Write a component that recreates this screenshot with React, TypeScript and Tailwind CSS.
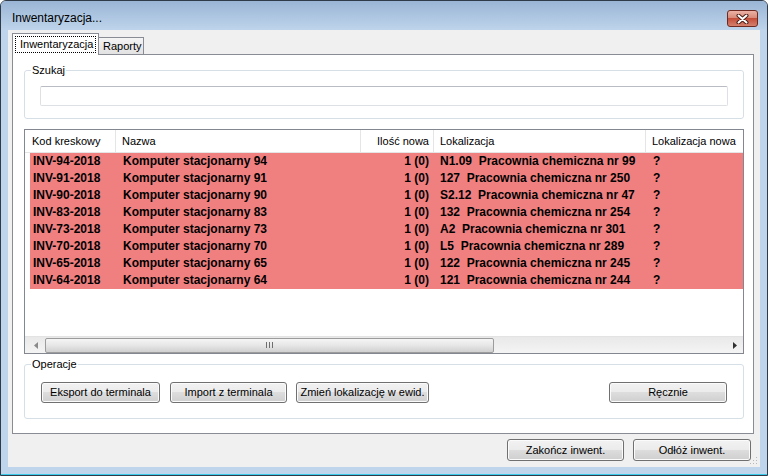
import { useState } from 'react';

const rows = [
    ['INV-94-2018', 'Komputer stacjonarny 94', '1 (0)', 'N1.09  Pracownia chemiczna nr 99', '?'],
    ['INV-91-2018', 'Komputer stacjonarny 91', '1 (0)', '127  Pracownia chemiczna nr 250', '?'],
    ['INV-90-2018', 'Komputer stacjonarny 90', '1 (0)', 'S2.12  Pracownia chemiczna nr 47', '?'],
    ['INV-83-2018', 'Komputer stacjonarny 83', '1 (0)', '132  Pracownia chemiczna nr 254', '?'],
    ['INV-73-2018', 'Komputer stacjonarny 73', '1 (0)', 'A2  Pracownia chemiczna nr 301', '?'],
    ['INV-70-2018', 'Komputer stacjonarny 70', '1 (0)', 'L5  Pracownia chemiczna nr 289', '?'],
    ['INV-65-2018', 'Komputer stacjonarny 65', '1 (0)', '122  Pracownia chemiczna nr 245', '?'],
    ['INV-64-2018', 'Komputer stacjonarny 64', '1 (0)', '121  Pracownia chemiczna nr 244', '?'],
];

function WinButton({ label, w, h }: { label: string; w: string; h: string }) {
    return (
        <button
            className={`${w} ${h} shrink-0 rounded-[3px] border border-[#707070] bg-[linear-gradient(to_bottom,#f2f2f2_0%,#ebebeb_50%,#dddddd_50%,#cfcfcf_100%)] shadow-[inset_0_0_0_1px_#fbfbfb] text-[11px] leading-none text-black`}
        >
            {label}
        </button>
    );
}

function App() {
    const [search, setSearch] = useState('');

    return (
        <div className="w-[768px] h-[476px] bg-white font-['Liberation_Sans',Arial,sans-serif] text-[11px] text-black">
            <div className="flex flex-col w-full h-full rounded-t-[6px] border border-[#2f3b48] bg-[#bfd5eb] overflow-hidden">

                {/* pasek tytułu */}
                <div className="flex items-start h-[29px] shrink-0 bg-gradient-to-b from-[#9ab5d5] to-[#bed4eb]">
                    <div className="pl-[11px] pt-[9px] text-[12px] leading-[16px]">Inwentaryzacja...</div>
                    <div className="ml-auto mt-[9px] mr-[9px] w-[31px] h-[17px] rounded-[3px] border border-[#6e2a20] bg-[linear-gradient(to_bottom,#ebb2a5_0%,#d98b7a_45%,#c34e3a_50%,#d5806e_100%)] flex items-center justify-center">
                        <svg width="13" height="10" viewBox="0 0 13 10">
                            <path d="M2.5 1.5 L10.5 8.5 M10.5 1.5 L2.5 8.5" stroke="#4b1c15" strokeWidth="4" strokeLinecap="round" />
                            <path d="M2.5 1.5 L10.5 8.5 M10.5 1.5 L2.5 8.5" stroke="#ffffff" strokeWidth="2" strokeLinecap="round" />
                        </svg>
                    </div>
                </div>

                {/* ramka + obszar klienta */}
                <div className="flex h-[437px] shrink-0">
                    <div className="w-[7px]" />
                    <div className="relative w-[752px] h-[437px] bg-[#f0f0f0] flex flex-col">

                        {/* zakładki */}
                        <div className="flex items-end h-[24px] pl-[4px]">
                            <div className="relative z-10 w-[87px] h-[22px] -mb-px bg-white border border-b-0 border-[#898c95] px-[2px] pt-[2px]">
                                <div className="h-[17px] border border-dotted border-black pl-[4px] leading-[15px] whitespace-nowrap">Inwentaryzacja</div>
                            </div>
                            <div className="w-[45px] h-[17px] border-t border-r border-[#898c95] bg-gradient-to-b from-[#f4f4f4] to-[#e2e2e2] pl-[4px] leading-[16px]">Raporty</div>
                        </div>

                        {/* panel zakładki */}
                        <div className="ml-[4px] w-[742px] h-[380px] border border-[#898c95] bg-white pl-[11px] pt-[8px]">

                            {/* Szukaj */}
                            <fieldset className="w-[720px] h-[56px] border border-[#d5dfe5] rounded-[3px]">
                                <legend className="ml-[6px] px-[1px] leading-[14px]">Szukaj</legend>
                                <input
                                    value={search}
                                    onChange={(e) => setSearch(e.target.value)}
                                    className="block mt-[9px] ml-[15px] w-[688px] h-[20px] border border-[#dde1e6] border-t-[#b9bdc3] rounded-[2px] bg-white outline-none px-[3px] text-[11px]"
                                />
                            </fieldset>

                            {/* lista */}
                            <div className="mt-[10px] w-[720px] h-[225px] border border-[#828790] bg-white flex flex-col">
                                <div className="flex h-[23px] shrink-0 border-b border-[#e5e5e5] leading-[22px] whitespace-nowrap">
                                    <div className="w-[91px] pl-[7px] border-r border-[#e5e5e5]">Kod kreskowy</div>
                                    <div className="w-[245px] pl-[6px] border-r border-[#e5e5e5]">Nazwa</div>
                                    <div className="w-[73px] pr-[4px] text-right border-r border-[#e5e5e5]">Ilość nowa</div>
                                    <div className="w-[212px] pl-[6px] border-r border-[#e5e5e5]">Lokalizacja</div>
                                    <div className="flex-1 pl-[6px] overflow-hidden">Lokalizacja nowa</div>
                                </div>

                                <div className="flex-1">
                                    {rows.map((r) => (
                                        <div key={r[0]} className="ml-[5px] flex h-[17px] bg-[#f08080] font-bold text-[12px] leading-[17px] whitespace-pre">
                                            <div className="w-[86px] pl-[3px] overflow-hidden">{r[0]}</div>
                                            <div className="w-[245px] pl-[7px] overflow-hidden">{r[1]}</div>
                                            <div className="w-[73px] pr-[5px] text-right overflow-hidden">{r[2]}</div>
                                            <div className="w-[212px] pl-[6px] overflow-hidden">{r[3]}</div>
                                            <div className="flex-1 pl-[7px] overflow-hidden">{r[4]}</div>
                                        </div>
                                    ))}
                                </div>

                                {/* pasek przewijania */}
                                <div className="flex items-center h-[17px] shrink-0 border-t border-[#e3e3e3] bg-gradient-to-b from-[#e9e9e9] to-[#f4f4f4]">
                                    <div className="w-[20px] flex justify-center pl-[2px]">
                                        <svg width="4" height="7" viewBox="0 0 4 7"><path d="M4 0 L0 3.5 L4 7 Z" fill="#8a8a8a" /></svg>
                                    </div>
                                    <div className="w-[449px] h-[15px] rounded-[2px] border border-[#9c9c9c] bg-gradient-to-b from-[#f5f5f5] via-[#e6e6e6] to-[#d0d0d0] flex items-center justify-center gap-[2px]">
                                        <div className="w-px h-[6px] bg-[#6e6e6e]" />
                                        <div className="w-px h-[6px] bg-[#6e6e6e]" />
                                        <div className="w-px h-[6px] bg-[#6e6e6e]" />
                                    </div>
                                    <div className="flex-1" />
                                    <div className="w-[17px] flex justify-center">
                                        <svg width="4" height="7" viewBox="0 0 4 7"><path d="M0 0 L4 3.5 L0 7 Z" fill="#303030" /></svg>
                                    </div>
                                </div>
                            </div>

                            {/* Operacje */}
                            <fieldset className="mt-[3px] w-[720px] h-[62px] border border-[#d5dfe5] rounded-[3px]">
                                <legend className="ml-[6px] px-[1px] leading-[14px]">Operacje</legend>
                                <div className="flex mt-[11px] px-[16px]">
                                    <WinButton label="Eksport do terminala" w="w-[119px]" h="h-[21px]" />
                                    <div className="ml-[10px]"><WinButton label="Import z terminala" w="w-[117px]" h="h-[21px]" /></div>
                                    <div className="ml-[9px]"><WinButton label="Zmień lokalizację w ewid." w="w-[133px]" h="h-[21px]" /></div>
                                    <div className="ml-auto"><WinButton label="Ręcznie" w="w-[118px]" h="h-[21px]" /></div>
                                </div>
                            </fieldset>
                        </div>

                        {/* przyciski na dole */}
                        <div className="flex justify-end gap-[9px] pr-[9px] mt-[5px]">
                            <WinButton label="Zakończ inwent." w="w-[117px]" h="h-[22px]" />
                            <WinButton label="Odłóż inwent." w="w-[118px]" h="h-[22px]" />
                        </div>

                        {/* uchwyt zmiany rozmiaru */}
                        <svg className="absolute right-[2px] bottom-[2px]" width="8" height="8" viewBox="0 0 8 8">
                            <rect x="6" y="0" width="1" height="1" fill="#b8b8b8" />
                            <rect x="3" y="3" width="1" height="1" fill="#b8b8b8" />
                            <rect x="6" y="3" width="1" height="1" fill="#b8b8b8" />
                            <rect x="0" y="6" width="1" height="1" fill="#b8b8b8" />
                            <rect x="3" y="6" width="1" height="1" fill="#b8b8b8" />
                            <rect x="6" y="6" width="1" height="1" fill="#b8b8b8" />
                        </svg>
                    </div>
                    <div className="flex-1" />
                </div>

                <div className="flex-1 border-b border-[#3acbeb]" />
            </div>
        </div>
    );
}

export default App;
